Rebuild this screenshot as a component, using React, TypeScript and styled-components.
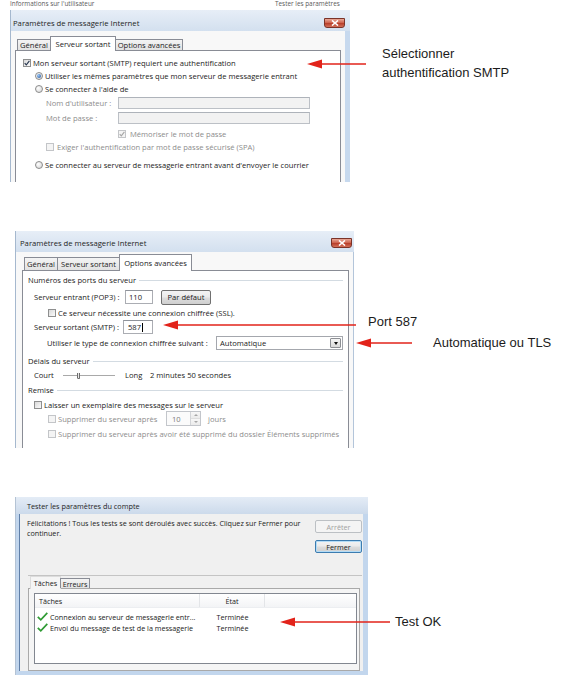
import React from 'react';
import styled, { createGlobalStyle } from 'styled-components';

const UI = '"Open Sans", "Noto Sans", "DejaVu Sans", sans-serif';
const NOTE = '"Liberation Sans", Arial, sans-serif';
const RED = '#e2231a';

const GlobalStyle = createGlobalStyle`
  * { box-sizing: border-box; }
  html, body { margin: 0; padding: 0; background: #ffffff; }
  body { font-family: ${UI}; }
`;

const Page = styled.div`
  width: 580px;
  height: 688px;
  display: flex;
  flex-direction: column;
  overflow: hidden;
  background: #ffffff;
`;

const Section = styled.section<{ $top: number; $height: number }>`
  position: relative;
  flex-shrink: 0;
  margin-top: ${p => p.$top}px;
  height: ${p => p.$height}px;
  display: flex;
  flex-direction: column;
  overflow: hidden;
`;

const ShotRow = styled.div<{ $left: number }>`
  display: flex;
  align-items: flex-start;
  padding-left: ${p => p.$left}px;
`;

/* bit of the window behind, at the top of the crop */
const BehindStrip = styled.div`
  margin-left: 10px;
  width: 340px;
  height: 10px;
  display: flex;
  align-items: flex-start;
  font-size: 6.4px;
  line-height: 8px;
  color: #5a5a5a;
  white-space: nowrap;
`;

const BehindText = styled.span<{ $w?: number }>`
  width: ${p => (p.$w ? `${p.$w}px` : 'auto')};
  flex-shrink: 0;
`;

const Window = styled.div<{ $w: number; $h: number; $edge: string; $fs: number }>`
  width: ${p => p.$w}px;
  height: ${p => p.$h}px;
  flex-shrink: 0;
  display: flex;
  flex-direction: column;
  border-left: 1px solid ${p => p.$edge};
  overflow: hidden;
  font-family: ${UI};
  font-size: ${p => p.$fs}px;
  color: #1b1b1b;
  white-space: nowrap;
`;

const TitleBar = styled.div<{ $h: number; $pl: number; $pt?: number; $fs: number; $tone?: 'blue' | 'gray' }>`
  height: ${p => p.$h}px;
  flex-shrink: 0;
  display: flex;
  align-items: center;
  justify-content: space-between;
  padding: ${p => p.$pt ?? 0}px 0 0 ${p => p.$pl}px;
  font-size: ${p => p.$fs}px;
  color: #1e1e1e;
  background: ${p =>
    p.$tone === 'gray'
      ? 'linear-gradient(#e4ecf6, #ccdaeb)'
      : 'linear-gradient(#e7eef7, #d3e0ef)'};
`;

const CloseBtn = styled.div<{ $mr: number }>`
  width: 21px;
  height: 10px;
  margin-right: ${p => p.$mr}px;
  display: flex;
  align-items: center;
  justify-content: center;
  border: 1px solid #7b3328;
  border-radius: 0 0 3px 3px;
  background: linear-gradient(#e9a897, #cf6550 45%, #b83f2b 55%, #d3715a);
`;

const Body = styled.div<{
  $pad: string;
  $bg: string;
  $frame?: string;
  $bl?: number;
  $br?: number;
  $bb?: number;
  $inset?: boolean;
}>`
  flex: 1;
  min-height: 0;
  display: flex;
  flex-direction: column;
  padding: ${p => p.$pad};
  background: ${p => p.$bg};
  border-style: solid;
  border-color: ${p => p.$frame ?? 'transparent'};
  border-width: 0 ${p => p.$br ?? 0}px ${p => p.$bb ?? 0}px ${p => p.$bl ?? 0}px;
  box-shadow: ${p => (p.$inset ? 'inset 1px 0 0 #5f7fa8' : 'none')};
`;

const TabStrip = styled.div<{ $h: number; $pl: number }>`
  position: relative;
  z-index: 1;
  flex-shrink: 0;
  height: ${p => p.$h}px;
  display: flex;
  align-items: flex-end;
  padding-left: ${p => p.$pl}px;
`;

const Tab = styled.div<{ $w: number; $h: number; $active?: boolean; $drop?: number; $soft?: boolean }>`
  width: ${p => p.$w}px;
  height: ${p => (p.$active ? p.$h + 1 : p.$h - (p.$drop ?? 3))}px;
  margin-bottom: ${p => (p.$active ? -1 : 0)}px;
  display: flex;
  align-items: center;
  justify-content: center;
  border: 1px solid ${p => (p.$soft && p.$active ? '#dcdcdc' : '#898c95')};
  border-bottom: none;
  background: ${p =>
    p.$active ? (p.$soft ? '#f5f5f5' : '#ffffff') : 'linear-gradient(#f4f4f4, #e2e2e2)'};
  & + & {
    margin-left: -1px;
  }
`;

const Panel = styled.div<{ $pad: string; $bg?: string; $line?: string; $open?: boolean; $mr?: number }>`
  flex: 1;
  min-height: 0;
  display: flex;
  flex-direction: column;
  padding: ${p => p.$pad};
  margin-right: ${p => p.$mr ?? 0}px;
  background: ${p => p.$bg ?? '#ffffff'};
  border: 1px solid ${p => p.$line ?? '#898c95'};
  border-bottom: ${p => (p.$open ? 'none' : `1px solid ${p.$line ?? '#898c95'}`)};
`;

const Row = styled.div<{ $mt?: number; $h?: number; $indent?: number }>`
  flex-shrink: 0;
  display: flex;
  align-items: center;
  height: ${p => p.$h ?? 13}px;
  margin-top: ${p => p.$mt ?? 0}px;
  padding-left: ${p => p.$indent ?? 0}px;
`;

const Group = styled(Row)`
  padding-right: 0;
`;

const Rule = styled.span`
  flex: 1;
  height: 0;
  margin-left: 3px;
  border-top: 1px solid #d3dbe2;
`;

const Option = styled.span<{ $muted?: boolean; $gap?: number }>`
  display: inline-flex;
  align-items: center;
  gap: ${p => p.$gap ?? 3}px;
  color: ${p => (p.$muted ? '#8c8c8c' : 'inherit')};
`;

const FieldLabel = styled.span<{ $w: number; $muted?: boolean; $ml?: number }>`
  width: ${p => p.$w}px;
  flex-shrink: 0;
  margin-left: ${p => p.$ml ?? 0}px;
  color: ${p => (p.$muted ? '#8c8c8c' : 'inherit')};
`;

const Plain = styled.span<{ $muted?: boolean; $ml?: number }>`
  margin-left: ${p => p.$ml ?? 0}px;
  color: ${p => (p.$muted ? '#8c8c8c' : 'inherit')};
`;

const Box = styled.span<{ $disabled?: boolean }>`
  width: 8px;
  height: 8px;
  flex-shrink: 0;
  display: inline-flex;
  align-items: center;
  justify-content: center;
  border: 1px solid ${p => (p.$disabled ? '#c3c5c8' : '#8e8f8f')};
  background: ${p => (p.$disabled ? '#f4f4f4' : 'linear-gradient(135deg, #d9d9d9, #fbfbfb)')};
`;

const RadioRing = styled.span`
  width: 8px;
  height: 8px;
  flex-shrink: 0;
  display: inline-flex;
  align-items: center;
  justify-content: center;
  border-radius: 50%;
  border: 1px solid #8c8c8c;
  background: radial-gradient(circle at 35% 35%, #ffffff, #d2d2d2);
`;

const RadioDot = styled.span`
  width: 4px;
  height: 4px;
  border-radius: 50%;
  background: radial-gradient(circle at 35% 35%, #9cc8f6, #1a4d98);
`;

const TextBox = styled.div<{ $w: number; $h: number; $disabled?: boolean; $pl?: number }>`
  width: ${p => p.$w}px;
  height: ${p => p.$h}px;
  flex-shrink: 0;
  display: flex;
  align-items: center;
  padding-left: ${p => p.$pl ?? 2}px;
  border: 1px solid ${p => (p.$disabled ? '#bcc0c6' : '#abadb3')};
  border-top-color: ${p => (p.$disabled ? '#aeb3ba' : '#8f939a')};
  background: ${p => (p.$disabled ? '#f2f2f2' : '#ffffff')};
`;

const Caret = styled.span`
  width: 1px;
  height: 9px;
  margin-left: 1px;
  background: #000000;
`;

const PushButton = styled.div<{ $w: number; $h: number; $ml?: number }>`
  width: ${p => p.$w}px;
  height: ${p => p.$h}px;
  margin-left: ${p => p.$ml ?? 0}px;
  flex-shrink: 0;
  display: flex;
  align-items: center;
  justify-content: center;
  border: 1px solid #707070;
  border-radius: 2px;
  background: linear-gradient(#f3f3f3, #ebebeb 48%, #dddddd 52%, #cfcfcf);
`;

const Select = styled.div<{ $w: number; $h: number }>`
  width: ${p => p.$w}px;
  height: ${p => p.$h}px;
  flex-shrink: 0;
  display: flex;
  align-items: center;
  justify-content: space-between;
  padding-left: 3px;
  border: 1px solid #a4a7ad;
  background: #ffffff;
`;

const DropBtn = styled.span`
  width: 11px;
  height: 10px;
  margin-right: 1px;
  display: flex;
  align-items: center;
  justify-content: center;
  border: 1px solid #8d8f94;
  border-radius: 1px;
  background: linear-gradient(#f6f6f6, #d9d9d9);
  &::after {
    content: '';
    border-left: 2.5px solid transparent;
    border-right: 2.5px solid transparent;
    border-top: 3px solid #111111;
  }
`;

const Slider = styled.span<{ $w: number }>`
  width: ${p => p.$w}px;
  flex-shrink: 0;
  display: flex;
  align-items: center;
`;

const Track = styled.span<{ $w?: number }>`
  flex: ${p => (p.$w ? `0 0 ${p.$w}px` : '1')};
  height: 0;
  border-top: 1px solid #a9a9a9;
`;

const Thumb = styled.span`
  width: 3px;
  height: 6px;
  margin-top: 1px;
  border: 1px solid #6e6e6e;
  border-top: none;
  border-radius: 0 0 2px 2px;
  background: #e8e8e8;
`;

const Spin = styled.div<{ $w: number; $h: number }>`
  width: ${p => p.$w}px;
  height: ${p => p.$h}px;
  flex-shrink: 0;
  display: flex;
  align-items: stretch;
  justify-content: space-between;
  border: 1px solid #c3c6cb;
  background: #fbfbfb;
  color: #7b7b7b;
`;

const SpinValue = styled.span`
  display: flex;
  align-items: center;
  padding-left: 5px;
`;

const SpinBtns = styled.span`
  width: 10px;
  display: flex;
  flex-direction: column;
  border-left: 1px solid #d3d5d8;
`;

const SpinHalf = styled.span<{ $down?: boolean }>`
  flex: 1;
  display: flex;
  align-items: center;
  justify-content: center;
  background: linear-gradient(#f7f7f7, #ebebeb);
  border-top: ${p => (p.$down ? '1px solid #dedede' : 'none')};
  &::after {
    content: '';
    border-left: 2px solid transparent;
    border-right: 2px solid transparent;
    ${p => (p.$down ? 'border-top: 2px solid #a6a6a6;' : 'border-bottom: 2px solid #a6a6a6;')}
  }
`;

/* test dialog parts */
const TopArea = styled.div`
  height: 61px;
  flex-shrink: 0;
  display: flex;
  justify-content: space-between;
`;

const Message = styled.div`
  padding-top: 4px;
  line-height: 10px;
`;

const ButtonCol = styled.div`
  width: 47px;
  padding-top: 6px;
  display: flex;
  flex-direction: column;
  gap: 7px;
`;

const DlgButton = styled.div<{ $disabled?: boolean; $default?: boolean }>`
  height: 13px;
  display: flex;
  align-items: center;
  justify-content: center;
  border-radius: 2px;
  border: 1px solid ${p => (p.$disabled ? '#bcc0c4' : p.$default ? '#3c7cb0' : '#707070')};
  background: ${p =>
    p.$disabled ? '#f4f4f4' : 'linear-gradient(#f3f3f3, #ebebeb 48%, #dddddd 52%, #cfcfcf)'};
  box-shadow: ${p => (p.$default ? 'inset 0 0 0 1px #b4dcf6' : 'none')};
  color: ${p => (p.$disabled ? '#a2a2a2' : '#1b1b1b')};
`;

const TabArea = styled.div`
  flex: 1;
  min-height: 0;
  display: flex;
  flex-direction: column;
  margin-left: 1px;
  border-top: 1px solid #c4c4c4;
`;

const ListView = styled.div`
  height: 71px;
  flex-shrink: 0;
  display: flex;
  flex-direction: column;
  border: 1px solid #828790;
  background: #ffffff;
`;

const ListHeader = styled.div`
  height: 14px;
  flex-shrink: 0;
  display: flex;
  background: linear-gradient(#ffffff, #f3f4f6);
  border-bottom: 1px solid #eceef1;
`;

const HeadCell = styled.div<{ $w?: number; $center?: boolean }>`
  ${p => (p.$w ? `width: ${p.$w}px; flex-shrink: 0;` : 'flex: 1;')}
  display: flex;
  align-items: center;
  justify-content: ${p => (p.$center ? 'center' : 'flex-start')};
  padding-left: ${p => (p.$center ? 0 : 4)}px;
  border-right: ${p => (p.$w ? '1px solid #e3e5e8' : 'none')};
`;

const ListRow = styled.div<{ $mt?: number }>`
  height: 11px;
  flex-shrink: 0;
  display: flex;
  align-items: center;
  margin-top: ${p => p.$mt ?? 0}px;
`;

const Cell = styled.div<{ $w: number; $center?: boolean }>`
  width: ${p => p.$w}px;
  flex-shrink: 0;
  display: flex;
  align-items: center;
  gap: 2px;
  padding-left: ${p => (p.$center ? 0 : 2)}px;
  justify-content: ${p => (p.$center ? 'center' : 'flex-start')};
`;

/* annotations */
const NoteCol = styled.div<{ $ml: number; $mt: number }>`
  margin-left: ${p => p.$ml}px;
  margin-top: ${p => p.$mt}px;
  display: flex;
  flex-direction: column;
  font-family: ${NOTE};
  font-size: 13px;
  color: #1c1c1c;
  white-space: nowrap;
`;

const NoteLine = styled.div<{ $lh: number; $ml?: number; $mt?: number }>`
  line-height: ${p => p.$lh}px;
  margin-left: ${p => p.$ml ?? 0}px;
  margin-top: ${p => p.$mt ?? 0}px;
`;

const ArrowSvg = styled.svg<{ $x: number; $y: number }>`
  position: absolute;
  left: ${p => p.$x}px;
  top: ${p => p.$y - 6}px;
  overflow: visible;
`;

function Arrow({ tip, tail, y }: { tip: number; tail: number; y: number }) {
  const len = tail - tip;
  return (
    <ArrowSvg $x={tip} $y={y} width={len} height={12} viewBox={`0 0 ${len} 12`}>
      <line x1={12} y1={6} x2={len} y2={6} stroke={RED} strokeWidth={1.6} />
      <polygon points="0,6 15,1.6 15,10.4" fill={RED} />
    </ArrowSvg>
  );
}

function CheckBox({ checked, disabled }: { checked?: boolean; disabled?: boolean }) {
  return (
    <Box $disabled={disabled}>
      {checked && (
        <svg width="6" height="6" viewBox="0 0 6 6">
          <path
            d="M0.7 3.1 L2.3 4.8 L5.4 0.9"
            fill="none"
            stroke={disabled ? '#a5a5a5' : '#27364f'}
            strokeWidth="1.1"
          />
        </svg>
      )}
    </Box>
  );
}

function Radio({ selected }: { selected?: boolean }) {
  return <RadioRing>{selected && <RadioDot />}</RadioRing>;
}

function CloseX() {
  return (
    <svg width="8" height="6" viewBox="0 0 8 6">
      <path d="M1 0.5 L7 5.5 M7 0.5 L1 5.5" stroke="#ffffff" strokeWidth="1.6" />
    </svg>
  );
}

function GreenCheck() {
  return (
    <svg width="11" height="9" viewBox="0 0 11 9">
      <path d="M0.8 4.8 L3.8 7.8 L10.3 0.9" fill="none" stroke="#2f9b34" strokeWidth="1.7" />
    </svg>
  );
}

export default function App() {
  return (
    <>
      <GlobalStyle />
      <Page>
        {/* 1 : Serveur sortant */}
        <Section $top={0} $height={182}>
          <BehindStrip>
            <BehindText $w={265}>Informations sur l'utilisateur</BehindText>
            <BehindText>Tester les paramètres</BehindText>
          </BehindStrip>
          <ShotRow $left={10}>
            <Window $w={340} $h={172} $edge="#a5b8ce" $fs={7.6}>
              <TitleBar $h={21} $pl={2} $pt={4} $fs={7.7}>
                <span>Paramètres de messagerie Internet</span>
                <CloseBtn $mr={5}>
                  <CloseX />
                </CloseBtn>
              </TitleBar>
              <Body $pad="5px 4px 0 4px" $bg="#f8f8f8" $frame="#c7d9ee" $br={5}>
                <TabStrip $h={14} $pl={2}>
                  <Tab $w={34} $h={14}>Général</Tab>
                  <Tab $w={66} $h={14} $active>Serveur sortant</Tab>
                  <Tab $w={68} $h={14}>Options avancées</Tab>
                </TabStrip>
                <Panel $pad="0 4px 0 7px" $open>
                  <Row $mt={5}>
                    <Option $gap={2}>
                      <CheckBox checked />
                      Mon serveur sortant (SMTP) requiert une authentification
                    </Option>
                  </Row>
                  <Row $indent={12}>
                    <Option $gap={2}>
                      <Radio selected />
                      Utiliser les mêmes paramètres que mon serveur de messagerie entrant
                    </Option>
                  </Row>
                  <Row $indent={12}>
                    <Option $gap={2}>
                      <Radio />
                      Se connecter à l'aide de
                    </Option>
                  </Row>
                  <Row $mt={1} $indent={23}>
                    <FieldLabel $w={72} $muted>Nom d'utilisateur :</FieldLabel>
                    <TextBox $w={192} $h={12} $disabled />
                  </Row>
                  <Row $mt={2} $indent={23}>
                    <FieldLabel $w={72} $muted>Mot de passe :</FieldLabel>
                    <TextBox $w={192} $h={12} $disabled />
                  </Row>
                  <Row $mt={3} $indent={95}>
                    <Option $muted $gap={4}>
                      <CheckBox checked disabled />
                      Mémoriser le mot de passe
                    </Option>
                  </Row>
                  <Row $indent={23}>
                    <Option $muted>
                      <CheckBox disabled />
                      Exiger l'authentification par mot de passe sécurisé (SPA)
                    </Option>
                  </Row>
                  <Row $mt={5} $indent={12}>
                    <Option $gap={2}>
                      <Radio />
                      Se connecter au serveur de messagerie entrant avant d'envoyer le courrier
                    </Option>
                  </Row>
                </Panel>
              </Body>
            </Window>
            <NoteCol $ml={32} $mt={34}>
              <NoteLine $lh={19}>Sélectionner</NoteLine>
              <NoteLine $lh={19}>authentification SMTP</NoteLine>
            </NoteCol>
          </ShotRow>
          <Arrow tip={307} tail={366} y={64} />
        </Section>

        {/* 2 : Options avancées */}
        <Section $top={49} $height={217}>
          <ShotRow $left={15}>
            <Window $w={339} $h={217} $edge="#a5b8ce" $fs={7.6}>
              <TitleBar $h={21} $pl={4} $pt={2} $fs={7.7}>
                <span>Paramètres de messagerie Internet</span>
                <CloseBtn $mr={2}>
                  <CloseX />
                </CloseBtn>
              </TitleBar>
              <Body $pad="2px 4px 0 6px" $bg="#f8f8f8" $frame="#b3c5da" $br={1}>
                <TabStrip $h={16} $pl={2}>
                  <Tab $w={34} $h={16}>Général</Tab>
                  <Tab $w={63} $h={16}>Serveur sortant</Tab>
                  <Tab $w={73} $h={16} $active>Options avancées</Tab>
                </TabStrip>
                <Panel $pad="0 5px 0 5px" $open>
                  <Group $mt={3} $h={12}>
                    <span>Numéros des ports du serveur</span>
                    <Rule />
                  </Group>
                  <Row $mt={3} $h={16} $indent={6}>
                    <FieldLabel $w={91}>Serveur entrant (POP3) :</FieldLabel>
                    <TextBox $w={28} $h={14} $pl={3}>110</TextBox>
                    <PushButton $w={50} $h={15} $ml={8}>Par défaut</PushButton>
                  </Row>
                  <Row $mt={2} $h={12} $indent={20}>
                    <Option $gap={2}>
                      <CheckBox />
                      Ce serveur nécessite une connexion chiffrée (SSL).
                    </Option>
                  </Row>
                  <Row $mt={1} $h={14} $indent={6}>
                    <FieldLabel $w={89}>Serveur sortant (SMTP) :</FieldLabel>
                    <TextBox $w={30} $h={14} $pl={4}>
                      587
                      <Caret />
                    </TextBox>
                  </Row>
                  <Row $mt={2} $h={14} $indent={19}>
                    <FieldLabel $w={169}>Utiliser le type de connexion chiffrée suivant :</FieldLabel>
                    <Select $w={127} $h={14}>
                      <span>Automatique</span>
                      <DropBtn />
                    </Select>
                  </Row>
                  <Group $mt={5} $h={12}>
                    <span>Délais du serveur</span>
                    <Rule />
                  </Group>
                  <Row $mt={2} $h={12} $indent={6}>
                    <FieldLabel $w={29}>Court</FieldLabel>
                    <Slider $w={52}>
                      <Track $w={14} />
                      <Thumb />
                      <Track />
                    </Slider>
                    <FieldLabel $w={25} $ml={10}>Long</FieldLabel>
                    <span>2 minutes 50 secondes</span>
                  </Row>
                  <Group $mt={3} $h={12}>
                    <span>Remise</span>
                    <Rule />
                  </Group>
                  <Row $mt={3} $h={12} $indent={6}>
                    <Option $gap={2}>
                      <CheckBox />
                      Laisser un exemplaire des messages sur le serveur
                    </Option>
                  </Row>
                  <Row $h={15} $indent={20}>
                    <Option $muted $gap={2}>
                      <CheckBox disabled />
                      <FieldLabel $w={108}>Supprimer du serveur après</FieldLabel>
                    </Option>
                    <Spin $w={35} $h={15}>
                      <SpinValue>10</SpinValue>
                      <SpinBtns>
                        <SpinHalf />
                        <SpinHalf $down />
                      </SpinBtns>
                    </Spin>
                    <Plain $muted $ml={7}>jours</Plain>
                  </Row>
                  <Row $mt={2} $h={12} $indent={20}>
                    <Option $muted $gap={2}>
                      <CheckBox disabled />
                      Supprimer du serveur après avoir été supprimé du dossier Éléments supprimés
                    </Option>
                  </Row>
                </Panel>
              </Body>
            </Window>
            <NoteCol $ml={14} $mt={82}>
              <NoteLine $lh={18}>Port 587</NoteLine>
              <NoteLine $lh={18} $ml={65} $mt={3}>Automatique ou TLS</NoteLine>
            </NoteCol>
          </ShotRow>
          <Arrow tip={163} tail={356} y={94} />
          <Arrow tip={356} tail={412} y={112} />
        </Section>

        {/* 3 : Tester les paramètres du compte */}
        <Section $top={49} $height={180}>
          <ShotRow $left={15}>
            <Window $w={353} $h={178} $edge="#b4c3d4" $fs={7.2}>
              <TitleBar $h={17} $pl={11} $fs={7.3} $tone="gray">
                <span>Tester les paramètres du compte</span>
              </TitleBar>
              <Body
                $pad="0 1px 0 8px"
                $bg="#f0f0f0"
                $frame="#c2d6ed"
                $bl={3}
                $br={5}
                $bb={4}
                $inset
              >
                <TopArea>
                  <Message>
                    Félicitations ! Tous les tests se sont déroulés avec succès. Cliquez sur Fermer pour
                    <br />
                    continuer.
                  </Message>
                  <ButtonCol>
                    <DlgButton $disabled>Arrêter</DlgButton>
                    <DlgButton $default>Fermer</DlgButton>
                  </ButtonCol>
                </TopArea>
                <TabArea>
                  <TabStrip $h={12} $pl={2}>
                    <Tab $w={31} $h={12} $active $soft>Tâches</Tab>
                    <Tab $w={30} $h={12} $drop={2}>Erreurs</Tab>
                  </TabStrip>
                  <Panel $pad="4px 2px 0 5px" $bg="#f5f5f5" $line="#a9a9a9" $mr={2}>
                    <ListView>
                      <ListHeader>
                        <HeadCell $w={165}>Tâches</HeadCell>
                        <HeadCell $w={65} $center>État</HeadCell>
                        <HeadCell />
                      </ListHeader>
                      <ListRow $mt={3}>
                        <Cell $w={165}>
                          <GreenCheck />
                          Connexion au serveur de messagerie entr...
                        </Cell>
                        <Cell $w={65} $center>Terminée</Cell>
                      </ListRow>
                      <ListRow>
                        <Cell $w={165}>
                          <GreenCheck />
                          Envoi du message de test de la messagerie
                        </Cell>
                        <Cell $w={65} $center>Terminée</Cell>
                      </ListRow>
                    </ListView>
                  </Panel>
                </TabArea>
              </Body>
            </Window>
            <NoteCol $ml={27} $mt={116}>
              <NoteLine $lh={18}>Test OK</NoteLine>
            </NoteCol>
          </ShotRow>
          <Arrow tip={280} tail={390} y={125} />
        </Section>
      </Page>
    </>
  );
}
